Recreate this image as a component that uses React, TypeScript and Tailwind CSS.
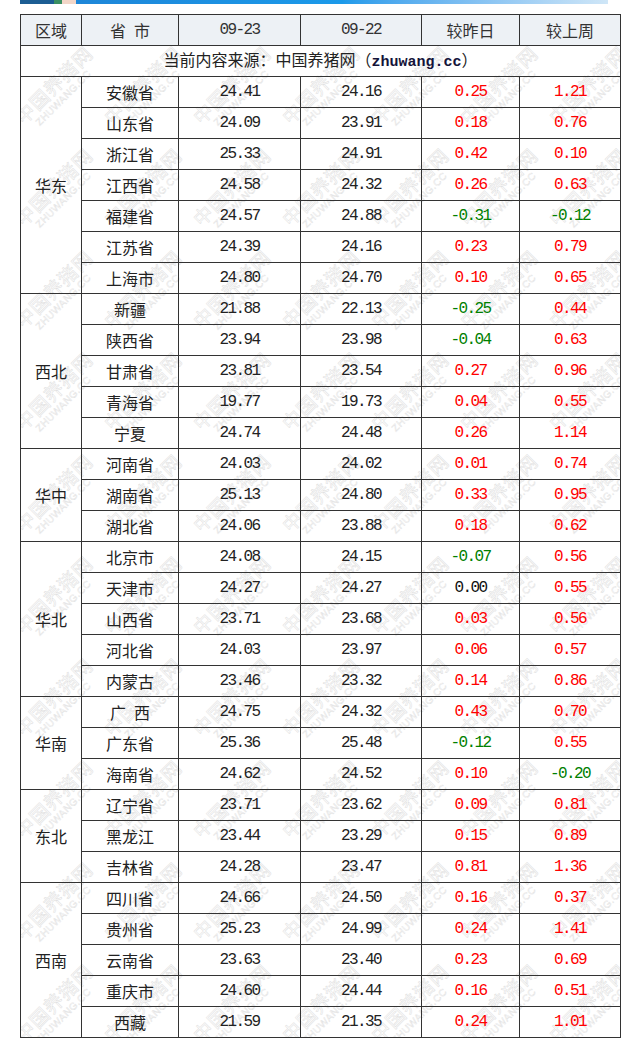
import React from "react";

type Row = [string, string, string, string, string];

const groups: { region: string; rows: Row[] }[] = [
  {
    region: "华东",
    rows: [
      ["安徽省", "24.41", "24.16", "0.25", "1.21"],
      ["山东省", "24.09", "23.91", "0.18", "0.76"],
      ["浙江省", "25.33", "24.91", "0.42", "0.10"],
      ["江西省", "24.58", "24.32", "0.26", "0.63"],
      ["福建省", "24.57", "24.88", "-0.31", "-0.12"],
      ["江苏省", "24.39", "24.16", "0.23", "0.79"],
      ["上海市", "24.80", "24.70", "0.10", "0.65"],
    ],
  },
  {
    region: "西北",
    rows: [
      ["新疆", "21.88", "22.13", "-0.25", "0.44"],
      ["陕西省", "23.94", "23.98", "-0.04", "0.63"],
      ["甘肃省", "23.81", "23.54", "0.27", "0.96"],
      ["青海省", "19.77", "19.73", "0.04", "0.55"],
      ["宁夏", "24.74", "24.48", "0.26", "1.14"],
    ],
  },
  {
    region: "华中",
    rows: [
      ["河南省", "24.03", "24.02", "0.01", "0.74"],
      ["湖南省", "25.13", "24.80", "0.33", "0.95"],
      ["湖北省", "24.06", "23.88", "0.18", "0.62"],
    ],
  },
  {
    region: "华北",
    rows: [
      ["北京市", "24.08", "24.15", "-0.07", "0.56"],
      ["天津市", "24.27", "24.27", "0.00", "0.55"],
      ["山西省", "23.71", "23.68", "0.03", "0.56"],
      ["河北省", "24.03", "23.97", "0.06", "0.57"],
      ["内蒙古", "23.46", "23.32", "0.14", "0.86"],
    ],
  },
  {
    region: "华南",
    rows: [
      ["广\u2002西", "24.75", "24.32", "0.43", "0.70"],
      ["广东省", "25.36", "25.48", "-0.12", "0.55"],
      ["海南省", "24.62", "24.52", "0.10", "-0.20"],
    ],
  },
  {
    region: "东北",
    rows: [
      ["辽宁省", "23.71", "23.62", "0.09", "0.81"],
      ["黑龙江", "23.44", "23.29", "0.15", "0.89"],
      ["吉林省", "24.28", "23.47", "0.81", "1.36"],
    ],
  },
  {
    region: "西南",
    rows: [
      ["四川省", "24.66", "24.50", "0.16", "0.37"],
      ["贵州省", "25.23", "24.99", "0.24", "1.41"],
      ["云南省", "23.63", "23.40", "0.23", "0.69"],
      ["重庆市", "24.60", "24.44", "0.16", "0.51"],
      ["西藏", "21.59", "21.35", "0.24", "1.01"],
    ],
  },
];

const cjk = "font-['Noto_Sans_CJK_SC',sans-serif] text-[16px]";
const num = "font-['Liberation_Mono',monospace] text-[16px] tracking-[-1.6px]";
const cell = "h-[31px] p-0 border border-[#333] text-center align-middle";

function diffColor(v: string) {
  if (v.startsWith("-")) return "text-[#008000]";
  if (v === "0.00") return "text-[#111]";
  return "text-[#ff0000]";
}

// faint diagonal site watermark behind the table
function Watermarks() {
  const marks: { x: number; y: number }[] = [];
  for (let j = 0; j < 11; j++) {
    for (let i = -1; i < 7; i++) {
      marks.push({ x: 5 + 89 * i, y: 11 + 102 * j });
    }
  }
  return (
    <div className="absolute inset-0 overflow-hidden pointer-events-none select-none" aria-hidden="true">
      {marks.map((m, idx) => (
        <div
          key={idx}
          className="absolute origin-top-left [transform:rotate(-45deg)_translateY(-20px)] leading-none whitespace-nowrap"
          style={{ left: m.x, top: m.y }}
        >
          <div className="h-[20px] font-['Noto_Sans_CJK_SC',sans-serif] text-[19px] tracking-[1px] text-white [-webkit-text-stroke:0.5px_#dedede]">
            中国养猪网
          </div>
          <div className="mt-[2px] pl-[11px] font-['Liberation_Sans',sans-serif] text-[10px] tracking-[0.5px] text-white [-webkit-text-stroke:0.4px_#dedede]">
            ZHUWANG.CC
          </div>
        </div>
      ))}
    </div>
  );
}

export default function App() {
  return (
    <div className="relative w-[635px] h-[1050px] bg-white overflow-hidden text-[#222]">
      {/* top banner strip */}
      <div className="ml-[20px] w-[588px] h-[4px] flex">
        <div className="w-[34px] bg-[#1c5d93]" />
        <div className="w-[8px] bg-[#3a8f62]" />
        <div className="w-[14px] bg-[#f2d6c8]" />
        <div className="flex-1 bg-gradient-to-r from-[#1d86d8] via-[#1b9aea] to-[#cfe6f7]" />
      </div>

      <div className="relative ml-[20px] mt-[10px] w-[600px]">
        <Watermarks />
        <table className="relative z-10 w-[600px] table-fixed border-collapse border border-[#333]">
          <colgroup>
            <col className="w-[61px]" />
            <col className="w-[97px]" />
            <col className="w-[122px]" />
            <col className="w-[121px]" />
            <col className="w-[98px]" />
            <col className="w-[101px]" />
          </colgroup>
          <thead>
            <tr className="bg-[#edf1f5] text-[#333]">
              <th className={`${cell} ${cjk} font-normal`}>区域</th>
              <th className={`${cell} ${cjk} font-normal`}>省{"\u2002"}市</th>
              <th className={`${cell} ${num} font-normal`}>09-23</th>
              <th className={`${cell} ${num} font-normal`}>09-22</th>
              <th className={`${cell} ${cjk} font-normal`}>较昨日</th>
              <th className={`${cell} ${cjk} font-normal`}>较上周</th>
            </tr>
          </thead>
          <tbody>
            <tr>
              <td colSpan={6} className={`${cell} ${cjk}`}>
                当前内容来源：中国养猪网（
                <span className="font-['Liberation_Mono',monospace] text-[15px] font-bold text-[#14143a]">
                  zhuwang.cc
                </span>
                ）
              </td>
            </tr>
            {groups.map((g) =>
              g.rows.map((r, i) => (
                <tr key={g.region + r[0]}>
                  {i === 0 && (
                    <td rowSpan={g.rows.length} className={`${cell} ${cjk}`}>
                      {g.region}
                    </td>
                  )}
                  <td className={`${cell} ${cjk}`}>{r[0]}</td>
                  <td className={`${cell} ${num}`}>{r[1]}</td>
                  <td className={`${cell} ${num}`}>{r[2]}</td>
                  <td className={`${cell} ${num} ${diffColor(r[3])}`}>{r[3]}</td>
                  <td className={`${cell} ${num} ${diffColor(r[4])}`}>{r[4]}</td>
                </tr>
              ))
            )}
          </tbody>
        </table>
      </div>
    </div>
  );
}
